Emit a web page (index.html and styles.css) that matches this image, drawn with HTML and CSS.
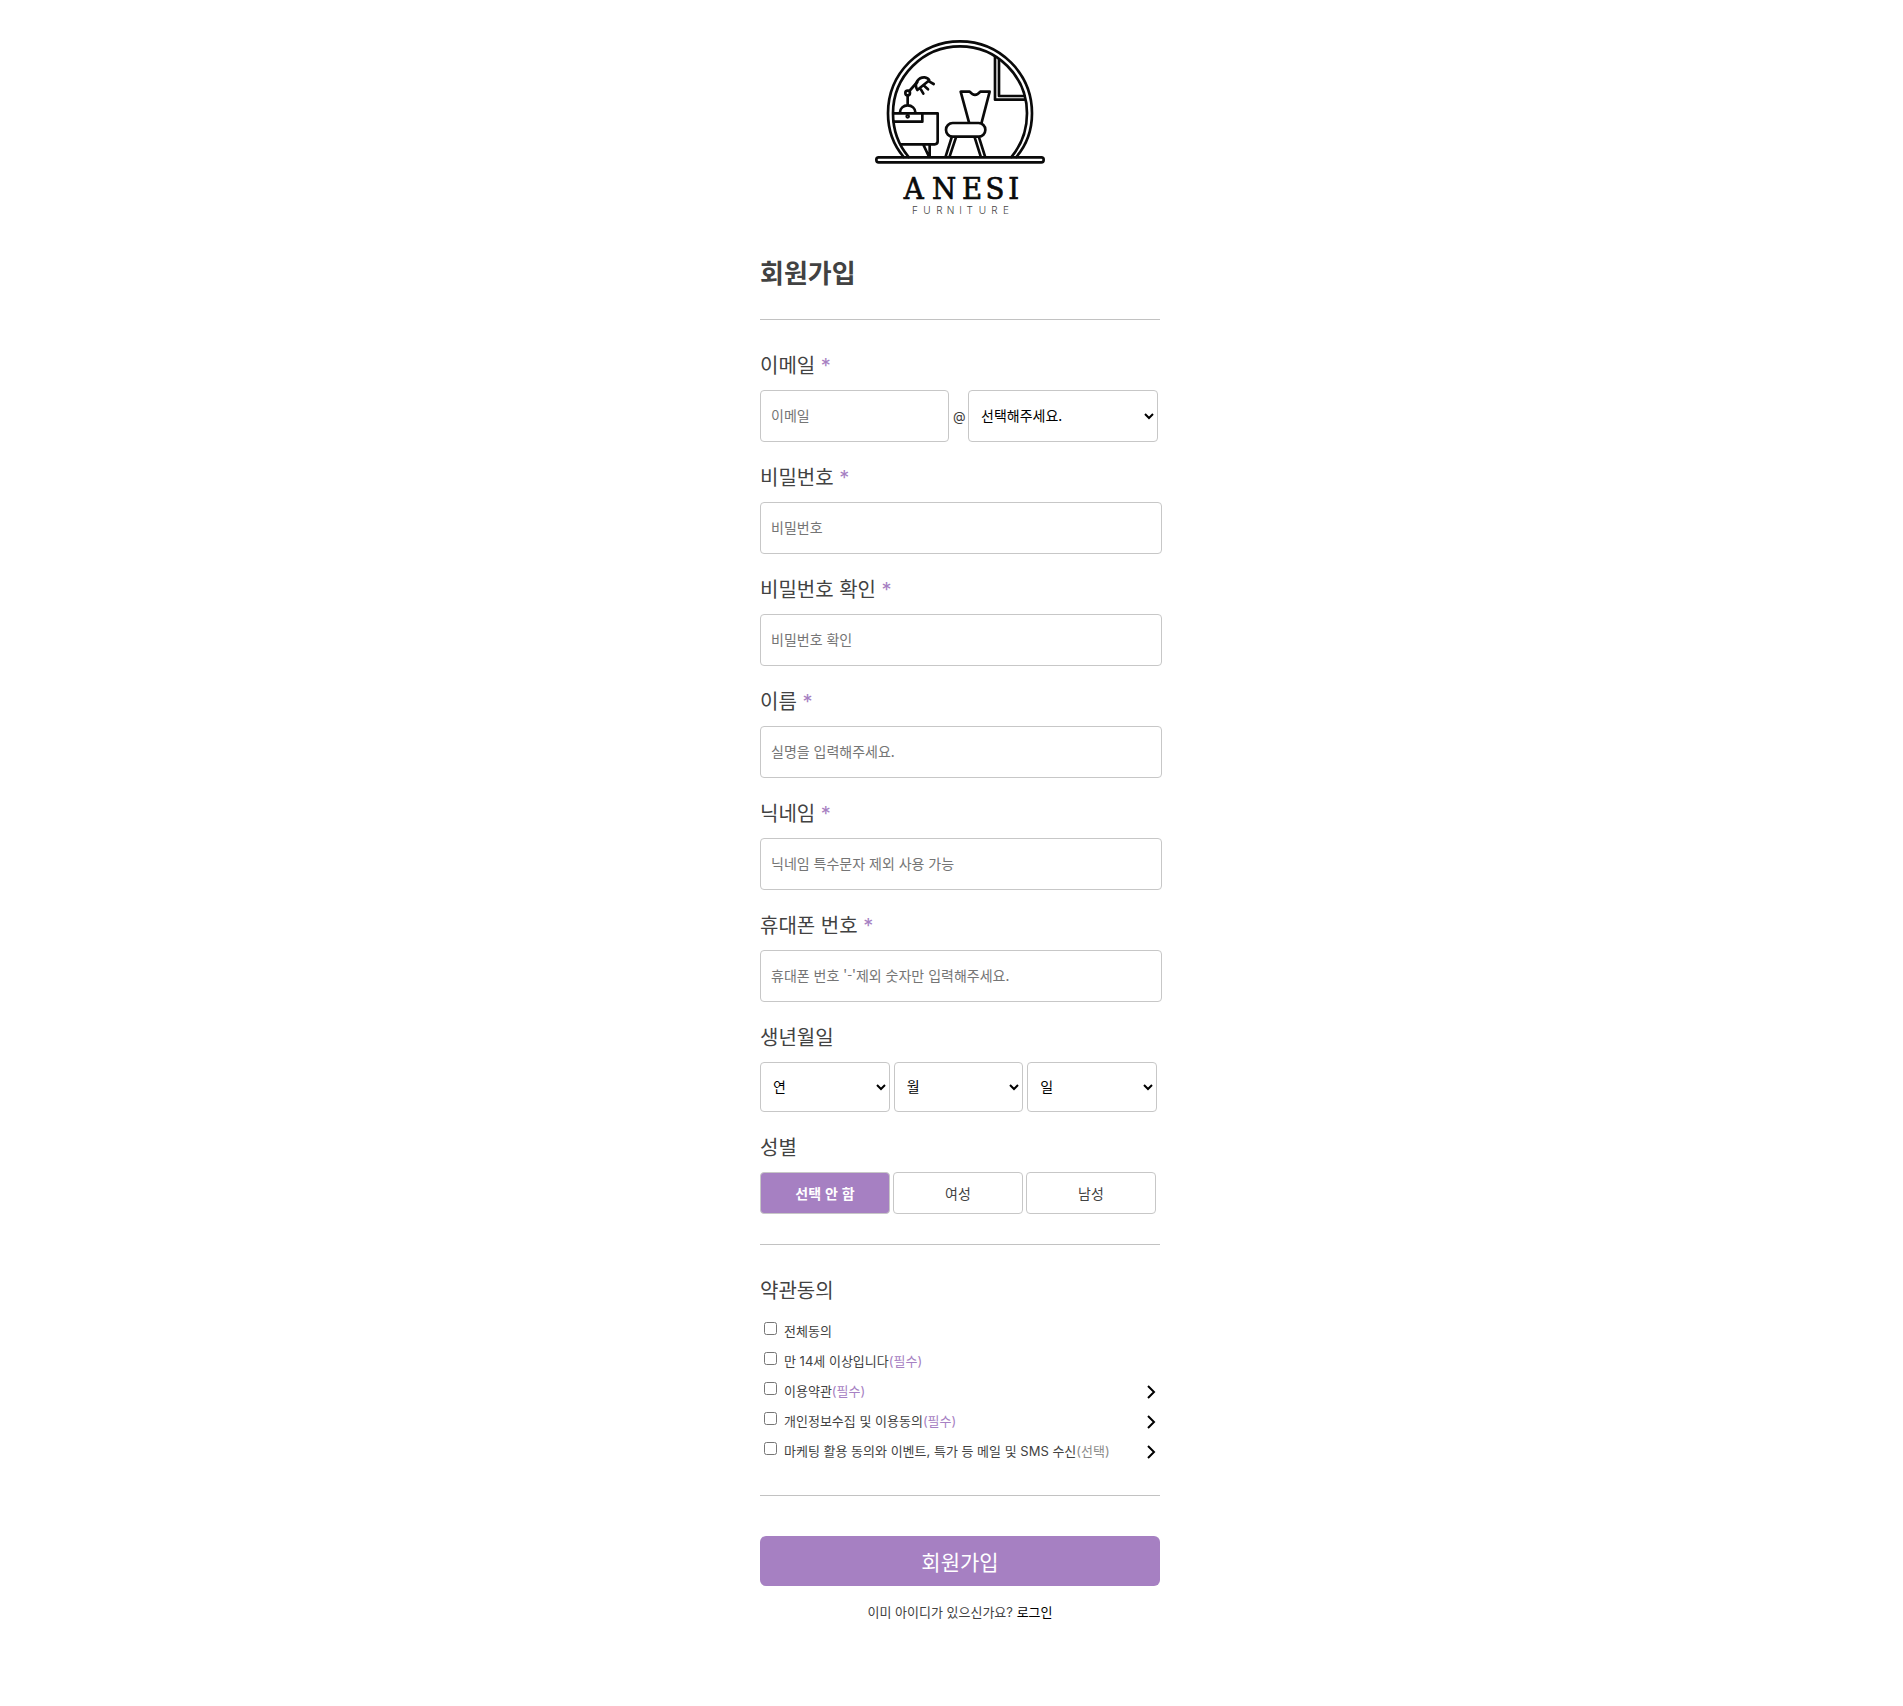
FILE: index.html
```html
<!DOCTYPE html>
<html lang="ko">
<head>
<meta charset="utf-8">
<meta name="viewport" content="width=device-width, initial-scale=1">
<title>회원가입 - ANESI FURNITURE</title>
<link rel="stylesheet" href="styles.css">
</head>
<body>
<main class="page">
  <form class="signup">
    <a class="logo" href="#" aria-label="ANESI FURNITURE">
      <svg class="logo-art" viewBox="0 0 600 600" role="img" aria-hidden="true">
        <g fill="none" stroke="#0a0a0a" stroke-width="8" stroke-linejoin="round" stroke-linecap="round">
          <path d="M131 381C100 345 84 300 84 250A216 216 0 0 1 516 250C516 300 500 345 469 381"/>
          <path d="M146 381C115 345 99 302 99 250A201 201 0 0 1 501 250C501 302 485 345 454 381"/>
          <rect x="49" y="382" width="502" height="15" rx="7"/>
          <path d="M405 80V209H494M417 88V198H494"/>
          <path d="M101 250H233V334Q233 343 224 343H122M101 275H187V252M190 344L206 378M209 344V378"/>
          <path d="M120 247A23 21 0 0 1 166 247M143 226V197M148 183L172 156"/>
          <circle cx="143" cy="189" r="7"/>
          <circle cx="143" cy="259" r="3"/>
          <path d="M172 180C160 160 176 141 194 142Q204 143 208 151ZM183 179L190 191M194 169L204 178M207 154L221 162"/>
          <path d="M327 277L302 185H329Q345 204 361 185H389L365 277"/>
          <rect x="258" y="279" width="118" height="41" rx="20"/>
          <path d="M275 322L257 379M288 322L269 379M344 322L362 379M357 322L375 379"/>
        </g>
        <text class="logo-name" x="161 252 336 405 461" y="507">ANESI</text>
        <text class="logo-sub" x="165 201 238 272 302 329 367 403 438" y="551">FURNITURE</text>
      </svg>
    </a>

    <h1 class="title">회원가입</h1>

    <section class="section">
      <div class="field">
        <label class="label" for="email">이메일 <span class="required">*</span></label>
        <div class="email-row">
          <input class="control" id="email" type="text" placeholder="이메일">
          <span class="at">@</span>
          <select class="control select" aria-label="이메일 도메인"><option>선택해주세요.</option></select>
        </div>
      </div>
      <div class="field">
        <label class="label" for="password">비밀번호 <span class="required">*</span></label>
        <input class="control wide" id="password" type="password" placeholder="비밀번호">
      </div>
      <div class="field">
        <label class="label" for="password-check">비밀번호 확인 <span class="required">*</span></label>
        <input class="control wide" id="password-check" type="password" placeholder="비밀번호 확인">
      </div>
      <div class="field">
        <label class="label" for="name">이름 <span class="required">*</span></label>
        <input class="control wide" id="name" type="text" placeholder="실명을 입력해주세요.">
      </div>
      <div class="field">
        <label class="label" for="nickname">닉네임 <span class="required">*</span></label>
        <input class="control wide" id="nickname" type="text" placeholder="닉네임 특수문자 제외 사용 가능">
      </div>
      <div class="field">
        <label class="label" for="phone">휴대폰 번호 <span class="required">*</span></label>
        <input class="control wide" id="phone" type="tel" placeholder="휴대폰 번호 '-'제외 숫자만 입력해주세요.">
      </div>
      <div class="field">
        <label class="label" for="year">생년월일</label>
        <div class="birth-row">
          <select class="control select short" id="year"><option>연</option></select>
          <select class="control select short" aria-label="월"><option>월</option></select>
          <select class="control select short" aria-label="일"><option>일</option></select>
        </div>
      </div>
      <div class="field">
        <span class="label">성별</span>
        <div class="gender-row">
          <button class="choice selected" type="button">선택 안 함</button>
          <button class="choice" type="button">여성</button>
          <button class="choice" type="button">남성</button>
        </div>
      </div>
    </section>

    <section class="section terms">
      <h2 class="label">약관동의</h2>
      <ul class="term-list">
        <li class="term"><label class="term-label"><input class="check" type="checkbox">전체동의</label></li>
        <li class="term"><label class="term-label"><input class="check" type="checkbox">만 14세 이상입니다<span class="must">(필수)</span></label></li>
        <li class="term"><label class="term-label"><input class="check" type="checkbox">이용약관<span class="must">(필수)</span></label>
          <a class="more" href="#" aria-label="이용약관 보기"><svg width="9" height="14" viewBox="0 0 9 14"><path d="M1 1L7 7L1 13"/></svg></a></li>
        <li class="term"><label class="term-label"><input class="check" type="checkbox">개인정보수집 및 이용동의<span class="must">(필수)</span></label>
          <a class="more" href="#" aria-label="개인정보수집 및 이용동의 보기"><svg width="9" height="14" viewBox="0 0 9 14"><path d="M1 1L7 7L1 13"/></svg></a></li>
        <li class="term"><label class="term-label"><input class="check" type="checkbox">마케팅 활용 동의와 이벤트, 특가 등 메일 및 SMS 수신<span class="optional">(선택)</span></label>
          <a class="more" href="#" aria-label="마케팅 활용 동의 보기"><svg width="9" height="14" viewBox="0 0 9 14"><path d="M1 1L7 7L1 13"/></svg></a></li>
      </ul>
    </section>

    <div class="section finish">
      <button class="submit" type="submit">회원가입</button>
      <p class="login">이미 아이디가 있으신가요? <a class="login-link" href="#">로그인</a></p>
    </div>
  </form>
</main>
</body>
</html>
```
FILE: styles.css
```css
* {
  box-sizing: border-box;
}

body {
  margin: 0;
  background: #fff;
  color: #424242;
  font-family: "Noto Sans CJK KR", sans-serif;
  font-size: 13px;
  line-height: 20px;
}

.page {
  display: flex;
  justify-content: center;
  padding: 30px 0 85px 17px;
}

.signup {
  width: 100%;
  max-width: 400px;
}

.logo {
  display: block;
  width: 200px;
  margin: 0 auto;
}

.logo-art {
  display: block;
  width: 100%;
}

.logo-name {
  fill: #0a0a0a;
  stroke: #0a0a0a;
  stroke-width: 2;
  font-family: "DejaVu Serif Condensed", "DejaVu Serif", serif;
  font-size: 92px;
  text-anchor: middle;
}

.logo-sub {
  fill: #444;
  font-family: Inter, sans-serif;
  font-size: 30px;
  font-weight: 300;
  text-anchor: middle;
}

.title {
  margin: 23px 0 28px;
  font-size: 26px;
  line-height: 38px;
}

.section {
  border-top: 1px solid #c2c2c2;
  padding: 32px 0 30px;
}

.field + .field {
  margin-top: 22px;
}

.label {
  display: block;
  margin: 0 0 12px;
  font-size: 20px;
  font-weight: 400;
  line-height: 26px;
}

.required {
  font-family: Inter, sans-serif;
  line-height: 1;
}

.required,
.must {
  color: #a680c2;
}

.optional {
  color: #8c8c8c;
}

.control {
  display: block;
  width: 100%;
  height: 52px;
  padding: 0 10px 2px;
  border: 1px solid #c7c7c7;
  border-radius: 4px;
  background-color: #fff;
  color: #000;
  font-family: inherit;
  font-size: 14px;
}

.control::placeholder {
  color: #757575;
}

.select {
  padding: 0 8px 2px;
}

.wide {
  width: calc(100% + 2px);
}

.email-row {
  display: grid;
  grid-template-columns: 189fr 11px 190fr;
  gap: 4px;
  align-items: center;
  padding-right: 2px;
}

.at {
  font-family: Inter, sans-serif;
  text-align: center;
}

.short {
  height: 50px;
}

.birth-row,
.gender-row {
  display: grid;
  grid-template-columns: repeat(3, 1fr);
  gap: 4px;
  padding-right: 3px;
}

.gender-row {
  gap: 3px;
  padding-right: 4px;
}

.choice {
  height: 42px;
  padding: 0;
  border: 1px solid #c7c7c7;
  border-radius: 4px;
  background: #fff;
  color: #424242;
  font-family: inherit;
  font-size: 14px;
}

.selected {
  background: #a680c2;
  color: #fff;
  font-weight: 700;
}

.terms {
  padding-bottom: 35px;
}

.terms .label {
  margin-bottom: 17px;
}

.term-list {
  display: grid;
  gap: 10px;
  margin: 0;
  padding: 0;
  list-style: none;
}

.term {
  display: flex;
  justify-content: space-between;
  height: 20px;
}

.term-label {
  display: flex;
  font-family: Inter, "Noto Sans CJK KR", sans-serif;
  line-height: 22px;
}

.check {
  width: 13px;
  height: 13px;
  margin: 2px 7px 0 4px;
}

.more {
  padding: 5px 4px 0 0;
}

.more svg {
  display: block;
  fill: none;
  stroke: #000;
  stroke-width: 2;
}

.finish {
  padding: 40px 0 0;
}

.submit {
  display: block;
  width: 100%;
  height: 50px;
  border: 0;
  border-radius: 6px;
  background: #a680c2;
  color: #fff;
  font-family: inherit;
  font-size: 21px;
}

.login {
  margin: 15px 0 0;
  font-family: Inter, "Noto Sans CJK KR", sans-serif;
  line-height: 22px;
  text-align: center;
}

.login-link {
  color: #000;
  text-decoration: none;
}
```
